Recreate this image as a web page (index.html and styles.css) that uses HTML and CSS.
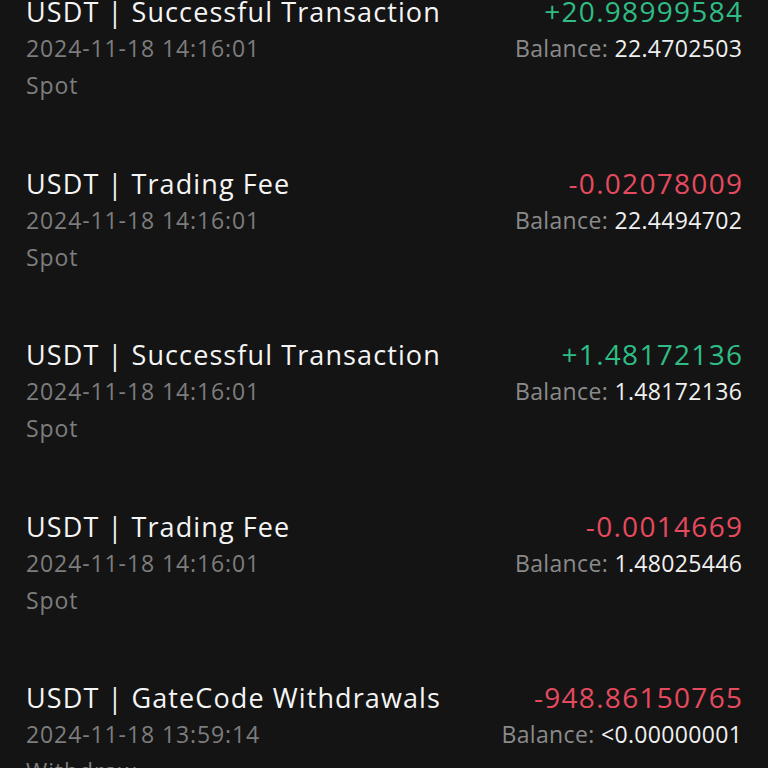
FILE: index.html
```html
<!DOCTYPE html>
<html>
<head>
<meta charset="utf-8">
<link rel="stylesheet" href="styles.css">
</head>
<body>
<div class="list">
  <div class="item">
    <div class="left">
      <div class="title">USDT | Successful Transaction</div>
      <div class="sub">2024-11-18 14:16:01</div>
      <div class="sub">Spot</div>
    </div>
    <div class="right">
      <div class="amount up">+20.98999584</div>
      <div class="bal"><span class="lbl">Balance:</span> 22.4702503</div>
    </div>
  </div>
  <div class="item">
    <div class="left">
      <div class="title">USDT | Trading Fee</div>
      <div class="sub">2024-11-18 14:16:01</div>
      <div class="sub">Spot</div>
    </div>
    <div class="right">
      <div class="amount down">-0.02078009</div>
      <div class="bal"><span class="lbl">Balance:</span> 22.4494702</div>
    </div>
  </div>
  <div class="item">
    <div class="left">
      <div class="title">USDT | Successful Transaction</div>
      <div class="sub">2024-11-18 14:16:01</div>
      <div class="sub">Spot</div>
    </div>
    <div class="right">
      <div class="amount up">+1.48172136</div>
      <div class="bal"><span class="lbl">Balance:</span> 1.48172136</div>
    </div>
  </div>
  <div class="item">
    <div class="left">
      <div class="title">USDT | Trading Fee</div>
      <div class="sub">2024-11-18 14:16:01</div>
      <div class="sub">Spot</div>
    </div>
    <div class="right">
      <div class="amount down">-0.0014669</div>
      <div class="bal"><span class="lbl">Balance:</span> 1.48025446</div>
    </div>
  </div>
  <div class="item">
    <div class="left">
      <div class="title">USDT | GateCode Withdrawals</div>
      <div class="sub">2024-11-18 13:59:14</div>
      <div class="sub">Withdraw</div>
    </div>
    <div class="right">
      <div class="amount down">-948.86150765</div>
      <div class="bal"><span class="lbl">Balance:</span> &lt;0.00000001</div>
    </div>
  </div>
</div>
</body>
</html>
```
FILE: styles.css
```css
html, body {
  margin: 0;
  padding: 0;
  background: #141414;
  height: 768px;
  overflow: hidden;
}
body {
  font-family: "Open Sans", Roboto, sans-serif;
  color: #ffffff;
}
.list {
  margin-top: -7px;
  padding: 0 26px;
}
.item {
  display: flex;
  justify-content: space-between;
  align-items: flex-start;
  height: 171.5px;
}
.left, .right {
  display: flex;
  flex-direction: column;
}
.right {
  align-items: flex-end;
}
.title {
  font-size: 27px;
  line-height: 37px;
  font-weight: 500;
  letter-spacing: 1.1px;
  color: #f5f5f5;
}
.sub {
  font-size: 23px;
  line-height: 37px;
  letter-spacing: 0.9px;
  color: #7d7d7d;
}
.amount {
  font-size: 28px;
  line-height: 37px;
  font-weight: 500;
  letter-spacing: 1.3px;
  margin-right: -1.3px;
}
.amount.up { color: #2fbd85; }
.amount.down { color: #e64a5f; }
.bal {
  font-size: 23px;
  line-height: 37px;
  letter-spacing: 0.35px;
  margin-right: -0.35px;
  color: #f0f0f0;
}
.lbl { color: #8a8a8a; }
```
